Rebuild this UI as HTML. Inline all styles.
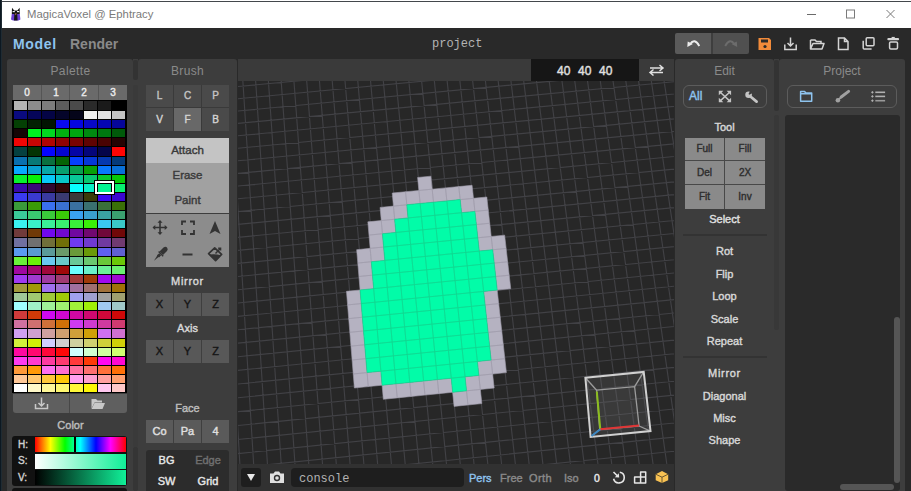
<!DOCTYPE html>
<html><head><meta charset="utf-8"><style>
html,body{margin:0;padding:0;}
body{width:911px;height:491px;position:relative;overflow:hidden;background:#292929;font-family:'Liberation Sans', sans-serif;}
body>div{position:absolute;}
.t{white-space:nowrap;overflow:visible;}
</style></head><body>
<div style="left:0px;top:0px;width:911px;height:28px;background:#ffffff;"></div>
<div style="left:0px;top:1px;width:911px;height:1px;background:#43474c;"></div>
<svg style="position:absolute;left:9px;top:6px;" width="13" height="16" viewBox="0 0 13 16">
<path d="M3 1.8 L5.2 4.6 H8.4 L10.6 1.8 L10.8 8 H2.8 Z" fill="#111"/>
<rect x="3.6" y="5" width="2.2" height="1.2" fill="#f0f0f0"/><rect x="8" y="5" width="2.2" height="1.2" fill="#f0f0f0"/>
<path d="M2.8 8 H10.8 L11.4 13.5 L9.5 14.5 H4 L2 13.5 Z" fill="#6b3fd0"/>
<path d="M5.4 8 H8.2 L8.6 14.5 H5 Z" fill="#151515"/>
<path d="M6 7.6 H7.6 L6.8 9.2 Z" fill="#f29a5a"/>
</svg>
<div class="t" style="left:27px;top:7px;width:200px;height:15px;line-height:15px;color:#7a7a7a;font-size:11.3px;font-weight:normal;text-align:left;font-family:'Liberation Sans', sans-serif;">MagicaVoxel @ Ephtracy</div>
<svg style="position:absolute;left:800px;top:5px;" width="110" height="20" viewBox="0 0 110 20">
<line x1="7" y1="9.5" x2="16" y2="9.5" stroke="#6a6a6a" stroke-width="1"/>
<rect x="46.5" y="5" width="8" height="8" fill="none" stroke="#7a7a7a" stroke-width="1"/>
<path d="M86.5 5 L94.5 13 M94.5 5 L86.5 13" stroke="#7a7a7a" stroke-width="1"/>
</svg>
<div style="left:0px;top:0px;width:1px;height:491px;background:#0c1821;"></div>
<div style="left:1px;top:0px;width:1px;height:491px;background:#1f2b33;"></div>
<div style="left:2px;top:28px;width:909px;height:31px;background:#292929;"></div>
<div class="t" style="left:13px;top:35px;width:50px;height:18px;line-height:18px;color:#8ec3ee;font-size:14px;font-weight:bold;text-align:left;font-family:'Liberation Sans', sans-serif;letter-spacing:0.7px;">Model</div>
<div class="t" style="left:70px;top:35px;width:60px;height:18px;line-height:18px;color:#8a8a8a;font-size:14px;font-weight:bold;text-align:left;font-family:'Liberation Sans', sans-serif;">Render</div>
<div class="t" style="left:432px;top:35px;width:80px;height:18px;line-height:18px;color:#b4b4b4;font-size:12px;font-weight:normal;text-align:left;font-family:'Liberation Mono', monospace;">project</div>
<div style="left:675px;top:33px;width:36px;height:21px;background:#5a5a5a;border-radius:2px 0 0 2px;"></div>
<div style="left:713px;top:33px;width:36px;height:21px;background:#505050;border-radius:0 2px 2px 0;"></div>
<div style="left:711px;top:33px;width:2px;height:21px;background:#3e3e3e;"></div>
<svg style="position:absolute;left:675px;top:33px;" width="74" height="21" viewBox="0 0 74 21">
<path d="M15 11.2 Q19.5 4.5 24.3 13" fill="none" stroke="#ececec" stroke-width="1.9"/>
<path d="M12.3 13.9 L12.7 8.4 L17.9 10.9 Z" fill="#ececec"/>
<path d="M59.5 11.2 Q55 4.5 50.2 13" fill="none" stroke="#6c6c6c" stroke-width="1.9"/>
<path d="M62.2 13.9 L61.8 8.4 L56.6 10.9 Z" fill="#6c6c6c"/>
</svg>
<svg style="position:absolute;left:757px;top:37px;" width="16" height="14" viewBox="0 0 16 14">
<path d="M1.5 1 H12 L14 3 V13 H1.5 Z" fill="#f28b3a"/>
<rect x="4" y="2.5" width="7" height="3" fill="#2b2b2b"/>
<circle cx="8" cy="9.5" r="1.6" fill="#2b2b2b"/>
</svg>
<svg style="position:absolute;left:783px;top:36px;" width="120" height="16" viewBox="0 0 120 16">
<g fill="none" stroke="#d4d4d4" stroke-width="1.5">
<path d="M1.8 8.5 V13.5 H13.2 V8.5"/>
<path d="M7.5 1.5 V10 M4.5 7 L7.5 10 L10.5 7"/>
<path d="M27.5 4 V13 H39 L41 7.5 H30 L27.5 13" stroke-linejoin="round"/>
<path d="M27.5 4 H32 L33.5 5.5 H38 V7.5"/>
<path d="M55.5 2 H61.5 L65 5.5 V13.5 H55.5 Z M61.5 2 V5.5 H65"/>
<rect x="83.2" y="1.8" width="7.8" height="7.9" rx="1"/>
<path d="M80.2 4.8 V12 Q80.2 13 81.2 13 H88.6"/>
<path d="M105.4 3.2 H115" stroke-width="2.2" stroke-linecap="round"/>
<path d="M108.6 1.6 H111.8" stroke-width="1.4"/>
<rect x="106.6" y="5.9" width="7.9" height="7.1" rx="1.2"/>
</g></svg>
<div style="left:7px;top:59px;width:126px;height:432px;background:#3d3d3d;border-radius:3px 3px 0 0;"></div>
<div class="t" style="left:8px;top:63px;width:125px;height:16px;line-height:16px;color:#8a8a8a;font-size:12px;font-weight:normal;text-align:center;font-family:'Liberation Sans', sans-serif;letter-spacing:0.4px;">Palette</div>
<div style="left:13px;top:85px;width:114px;height:15px;background:#6a6a6a;"></div>
<div class="t" style="left:13px;top:85px;width:28px;height:15px;line-height:15px;color:#ececec;font-size:10px;font-weight:normal;text-align:center;font-family:'Liberation Sans', sans-serif;-webkit-text-stroke:0.4px #ececec;">0</div>
<div style="left:41px;top:85px;width:1px;height:15px;background:#555555;"></div>
<div class="t" style="left:42px;top:85px;width:28px;height:15px;line-height:15px;color:#ececec;font-size:10px;font-weight:normal;text-align:center;font-family:'Liberation Sans', sans-serif;-webkit-text-stroke:0.4px #ececec;">1</div>
<div style="left:69px;top:85px;width:1px;height:15px;background:#555555;"></div>
<div class="t" style="left:70px;top:85px;width:28px;height:15px;line-height:15px;color:#ececec;font-size:10px;font-weight:normal;text-align:center;font-family:'Liberation Sans', sans-serif;-webkit-text-stroke:0.4px #ececec;">2</div>
<div style="left:98px;top:85px;width:1px;height:15px;background:#555555;"></div>
<div class="t" style="left:99px;top:85px;width:28px;height:15px;line-height:15px;color:#ececec;font-size:10px;font-weight:normal;text-align:center;font-family:'Liberation Sans', sans-serif;-webkit-text-stroke:0.4px #ececec;">3</div>
<div style="left:12px;top:100px;width:115px;height:293px;background:#000000;"></div>
<svg style="position:absolute;left:13px;top:100px;" width="114" height="293" viewBox="0 0 114 293"><rect x="1" y="1" width="13" height="9" fill="#b4b4b4"/><rect x="15" y="1" width="13" height="9" fill="#8c8c8c"/><rect x="29" y="1" width="13" height="9" fill="#7c7c7c"/><rect x="43" y="1" width="13" height="9" fill="#5c5c5c"/><rect x="57" y="1" width="13" height="9" fill="#4a4a4a"/><rect x="71" y="1" width="13" height="9" fill="#2a2a2a"/><rect x="85" y="1" width="13" height="9" fill="#1a1a1a"/><rect x="99" y="1" width="13" height="9" fill="#000000"/><rect x="1" y="11" width="13" height="8" fill="#0a0a80"/><rect x="15" y="11" width="13" height="8" fill="#05055a"/><rect x="29" y="11" width="13" height="8" fill="#040445"/><rect x="43" y="11" width="13" height="8" fill="#05052a"/><rect x="57" y="11" width="13" height="8" fill="#05051a"/><rect x="71" y="11" width="13" height="8" fill="#f0f0f0"/><rect x="85" y="11" width="13" height="8" fill="#e0e0e0"/><rect x="99" y="11" width="13" height="8" fill="#c4c4c4"/><rect x="1" y="20" width="13" height="8" fill="#044004"/><rect x="15" y="20" width="13" height="8" fill="#032003"/><rect x="29" y="20" width="13" height="8" fill="#021502"/><rect x="43" y="20" width="13" height="8" fill="#0a0af0"/><rect x="57" y="20" width="13" height="8" fill="#0505e0"/><rect x="71" y="20" width="13" height="8" fill="#0808c8"/><rect x="85" y="20" width="13" height="8" fill="#0505b4"/><rect x="99" y="20" width="13" height="8" fill="#06069a"/><rect x="1" y="29" width="13" height="8" fill="#140505"/><rect x="15" y="29" width="13" height="8" fill="#00f020"/><rect x="29" y="29" width="13" height="8" fill="#00d820"/><rect x="43" y="29" width="13" height="8" fill="#00b010"/><rect x="57" y="29" width="13" height="8" fill="#00a810"/><rect x="71" y="29" width="13" height="8" fill="#008a10"/><rect x="85" y="29" width="13" height="8" fill="#007810"/><rect x="99" y="29" width="13" height="8" fill="#005a0a"/><rect x="1" y="38" width="13" height="8" fill="#f00505"/><rect x="15" y="38" width="13" height="8" fill="#c80505"/><rect x="29" y="38" width="13" height="8" fill="#b00404"/><rect x="43" y="38" width="13" height="8" fill="#900303"/><rect x="57" y="38" width="13" height="8" fill="#7a0303"/><rect x="71" y="38" width="13" height="8" fill="#600303"/><rect x="85" y="38" width="13" height="8" fill="#4a0303"/><rect x="99" y="38" width="13" height="8" fill="#250303"/><rect x="1" y="47" width="13" height="9" fill="#054040"/><rect x="15" y="47" width="13" height="9" fill="#043304"/><rect x="29" y="47" width="13" height="9" fill="#0505ff"/><rect x="43" y="47" width="13" height="9" fill="#0505d0"/><rect x="57" y="47" width="13" height="9" fill="#0505a5"/><rect x="71" y="47" width="13" height="9" fill="#05057a"/><rect x="85" y="47" width="13" height="9" fill="#05054a"/><rect x="99" y="47" width="13" height="9" fill="#ff0505"/><rect x="1" y="57" width="13" height="8" fill="#0a70b0"/><rect x="15" y="57" width="13" height="8" fill="#087878"/><rect x="29" y="57" width="13" height="8" fill="#0a7040"/><rect x="43" y="57" width="13" height="8" fill="#056405"/><rect x="57" y="57" width="13" height="8" fill="#0540ff"/><rect x="71" y="57" width="13" height="8" fill="#0538d8"/><rect x="85" y="57" width="13" height="8" fill="#0538b0"/><rect x="99" y="57" width="13" height="8" fill="#053a7a"/><rect x="1" y="66" width="13" height="8" fill="#08a8ff"/><rect x="15" y="66" width="13" height="8" fill="#08a0d0"/><rect x="29" y="66" width="13" height="8" fill="#08a8a8"/><rect x="43" y="66" width="13" height="8" fill="#08a070"/><rect x="57" y="66" width="13" height="8" fill="#08a050"/><rect x="71" y="66" width="13" height="8" fill="#08a008"/><rect x="85" y="66" width="13" height="8" fill="#0878ff"/><rect x="99" y="66" width="13" height="8" fill="#0870d8"/><rect x="1" y="75" width="13" height="8" fill="#08f030"/><rect x="15" y="75" width="13" height="8" fill="#08f008"/><rect x="29" y="75" width="13" height="8" fill="#08c8f8"/><rect x="43" y="75" width="13" height="8" fill="#08c8c8"/><rect x="57" y="75" width="13" height="8" fill="#08c898"/><rect x="71" y="75" width="13" height="8" fill="#08c870"/><rect x="85" y="75" width="13" height="8" fill="#08c830"/><rect x="99" y="75" width="13" height="8" fill="#08c808"/><rect x="1" y="84" width="13" height="8" fill="#3a08a8"/><rect x="15" y="84" width="13" height="8" fill="#3a0878"/><rect x="29" y="84" width="13" height="8" fill="#300830"/><rect x="43" y="84" width="13" height="8" fill="#300808"/><rect x="57" y="84" width="13" height="8" fill="#08ffff"/><rect x="71" y="84" width="13" height="8" fill="#08f0c8"/><rect x="85" y="84" width="13" height="8" fill="#02f592"/><rect x="99" y="84" width="13" height="8" fill="#08f070"/><rect x="1" y="93" width="13" height="8" fill="#3a3af0"/><rect x="15" y="93" width="13" height="8" fill="#3a3ad0"/><rect x="29" y="93" width="13" height="8" fill="#3a3aa0"/><rect x="43" y="93" width="13" height="8" fill="#3a3a70"/><rect x="57" y="93" width="13" height="8" fill="#3a3a3a"/><rect x="71" y="93" width="13" height="8" fill="#3a3a08"/><rect x="85" y="93" width="13" height="8" fill="#3a08f0"/><rect x="99" y="93" width="13" height="8" fill="#3a08d0"/><rect x="1" y="102" width="13" height="8" fill="#3a9a3a"/><rect x="15" y="102" width="13" height="8" fill="#3a9a08"/><rect x="29" y="102" width="13" height="8" fill="#3a70f0"/><rect x="43" y="102" width="13" height="8" fill="#3a70d0"/><rect x="57" y="102" width="13" height="8" fill="#3a70a0"/><rect x="71" y="102" width="13" height="8" fill="#3a7070"/><rect x="85" y="102" width="13" height="8" fill="#3a703a"/><rect x="99" y="102" width="13" height="8" fill="#3a7008"/><rect x="1" y="111" width="13" height="8" fill="#3ac898"/><rect x="15" y="111" width="13" height="8" fill="#3ac870"/><rect x="29" y="111" width="13" height="8" fill="#3ac83a"/><rect x="43" y="111" width="13" height="8" fill="#3ac808"/><rect x="57" y="111" width="13" height="8" fill="#3aa0f0"/><rect x="71" y="111" width="13" height="8" fill="#3aa0d0"/><rect x="85" y="111" width="13" height="8" fill="#3aa0a0"/><rect x="99" y="111" width="13" height="8" fill="#3aa070"/><rect x="1" y="120" width="13" height="8" fill="#3af0f0"/><rect x="15" y="120" width="13" height="8" fill="#3af0c8"/><rect x="29" y="120" width="13" height="8" fill="#3af098"/><rect x="43" y="120" width="13" height="8" fill="#3af070"/><rect x="57" y="120" width="13" height="8" fill="#3af03a"/><rect x="71" y="120" width="13" height="8" fill="#3af008"/><rect x="85" y="120" width="13" height="8" fill="#3ac8f0"/><rect x="99" y="120" width="13" height="8" fill="#3ac8c8"/><rect x="1" y="129" width="13" height="8" fill="#703a3a"/><rect x="15" y="129" width="13" height="8" fill="#703a08"/><rect x="29" y="129" width="13" height="8" fill="#7008f0"/><rect x="43" y="129" width="13" height="8" fill="#7008d0"/><rect x="57" y="129" width="13" height="8" fill="#7008a0"/><rect x="71" y="129" width="13" height="8" fill="#700870"/><rect x="85" y="129" width="13" height="8" fill="#70083a"/><rect x="99" y="129" width="13" height="8" fill="#700808"/><rect x="1" y="138" width="13" height="9" fill="#7070a0"/><rect x="15" y="138" width="13" height="9" fill="#707070"/><rect x="29" y="138" width="13" height="9" fill="#70703a"/><rect x="43" y="138" width="13" height="9" fill="#707008"/><rect x="57" y="138" width="13" height="9" fill="#703af0"/><rect x="71" y="138" width="13" height="9" fill="#703ad0"/><rect x="85" y="138" width="13" height="9" fill="#703aa0"/><rect x="99" y="138" width="13" height="9" fill="#703a70"/><rect x="1" y="148" width="13" height="8" fill="#5a9af0"/><rect x="15" y="148" width="13" height="8" fill="#5a9ad0"/><rect x="29" y="148" width="13" height="8" fill="#5a9a9a"/><rect x="43" y="148" width="13" height="8" fill="#6a9a6a"/><rect x="57" y="148" width="13" height="8" fill="#6a9a3a"/><rect x="71" y="148" width="13" height="8" fill="#6a9a08"/><rect x="85" y="148" width="13" height="8" fill="#6060f0"/><rect x="99" y="148" width="13" height="8" fill="#6060d0"/><rect x="1" y="157" width="13" height="8" fill="#6af03a"/><rect x="15" y="157" width="13" height="8" fill="#6af008"/><rect x="29" y="157" width="13" height="8" fill="#6ac8f0"/><rect x="43" y="157" width="13" height="8" fill="#6ac8c8"/><rect x="57" y="157" width="13" height="8" fill="#6ac898"/><rect x="71" y="157" width="13" height="8" fill="#6ac870"/><rect x="85" y="157" width="13" height="8" fill="#6ac83a"/><rect x="99" y="157" width="13" height="8" fill="#6ac808"/><rect x="1" y="166" width="13" height="8" fill="#a008a0"/><rect x="15" y="166" width="13" height="8" fill="#a00870"/><rect x="29" y="166" width="13" height="8" fill="#a0083a"/><rect x="43" y="166" width="13" height="8" fill="#a00808"/><rect x="57" y="166" width="13" height="8" fill="#6affff"/><rect x="71" y="166" width="13" height="8" fill="#6af0c8"/><rect x="85" y="166" width="13" height="8" fill="#6af098"/><rect x="99" y="166" width="13" height="8" fill="#6af070"/><rect x="1" y="175" width="13" height="8" fill="#a03af0"/><rect x="15" y="175" width="13" height="8" fill="#a03ad0"/><rect x="29" y="175" width="13" height="8" fill="#a03aa0"/><rect x="43" y="175" width="13" height="8" fill="#a03a70"/><rect x="57" y="175" width="13" height="8" fill="#a03a3a"/><rect x="71" y="175" width="13" height="8" fill="#a03a08"/><rect x="85" y="175" width="13" height="8" fill="#a008f0"/><rect x="99" y="175" width="13" height="8" fill="#a008d0"/><rect x="1" y="184" width="13" height="8" fill="#a09a3a"/><rect x="15" y="184" width="13" height="8" fill="#a09a08"/><rect x="29" y="184" width="13" height="8" fill="#a070f0"/><rect x="43" y="184" width="13" height="8" fill="#a070d0"/><rect x="57" y="184" width="13" height="8" fill="#a070a0"/><rect x="71" y="184" width="13" height="8" fill="#a07070"/><rect x="85" y="184" width="13" height="8" fill="#a0703a"/><rect x="99" y="184" width="13" height="8" fill="#a07008"/><rect x="1" y="193" width="13" height="8" fill="#a0c898"/><rect x="15" y="193" width="13" height="8" fill="#a0c870"/><rect x="29" y="193" width="13" height="8" fill="#a0c83a"/><rect x="43" y="193" width="13" height="8" fill="#a0c808"/><rect x="57" y="193" width="13" height="8" fill="#a0a0f0"/><rect x="71" y="193" width="13" height="8" fill="#a0a0d0"/><rect x="85" y="193" width="13" height="8" fill="#a0a0a0"/><rect x="99" y="193" width="13" height="8" fill="#a0a070"/><rect x="1" y="202" width="13" height="8" fill="#a0ffff"/><rect x="15" y="202" width="13" height="8" fill="#a0f0c8"/><rect x="29" y="202" width="13" height="8" fill="#a0f098"/><rect x="43" y="202" width="13" height="8" fill="#a0f070"/><rect x="57" y="202" width="13" height="8" fill="#a0f03a"/><rect x="71" y="202" width="13" height="8" fill="#a0f008"/><rect x="85" y="202" width="13" height="8" fill="#a0c8f0"/><rect x="99" y="202" width="13" height="8" fill="#a0c8c8"/><rect x="1" y="211" width="13" height="8" fill="#d03a3a"/><rect x="15" y="211" width="13" height="8" fill="#d03a08"/><rect x="29" y="211" width="13" height="8" fill="#d008f0"/><rect x="43" y="211" width="13" height="8" fill="#d008d0"/><rect x="57" y="211" width="13" height="8" fill="#d008a0"/><rect x="71" y="211" width="13" height="8" fill="#d00870"/><rect x="85" y="211" width="13" height="8" fill="#d0083a"/><rect x="99" y="211" width="13" height="8" fill="#d00808"/><rect x="1" y="220" width="13" height="8" fill="#d070a0"/><rect x="15" y="220" width="13" height="8" fill="#d07070"/><rect x="29" y="220" width="13" height="8" fill="#d0703a"/><rect x="43" y="220" width="13" height="8" fill="#d07008"/><rect x="57" y="220" width="13" height="8" fill="#d03af0"/><rect x="71" y="220" width="13" height="8" fill="#d03ad0"/><rect x="85" y="220" width="13" height="8" fill="#d03aa0"/><rect x="99" y="220" width="13" height="8" fill="#d03a70"/><rect x="1" y="229" width="13" height="9" fill="#d0a0f0"/><rect x="15" y="229" width="13" height="9" fill="#d0a0d0"/><rect x="29" y="229" width="13" height="9" fill="#d0a0a0"/><rect x="43" y="229" width="13" height="9" fill="#d0a070"/><rect x="57" y="229" width="13" height="9" fill="#d0a03a"/><rect x="71" y="229" width="13" height="9" fill="#d0a008"/><rect x="85" y="229" width="13" height="9" fill="#d070f0"/><rect x="99" y="229" width="13" height="9" fill="#d070d0"/><rect x="1" y="239" width="13" height="8" fill="#d0f03a"/><rect x="15" y="239" width="13" height="8" fill="#d0f008"/><rect x="29" y="239" width="13" height="8" fill="#d0d0ff"/><rect x="43" y="239" width="13" height="8" fill="#d0d0d0"/><rect x="57" y="239" width="13" height="8" fill="#d0d0a0"/><rect x="71" y="239" width="13" height="8" fill="#d0d070"/><rect x="85" y="239" width="13" height="8" fill="#d0d03a"/><rect x="99" y="239" width="13" height="8" fill="#d0d008"/><rect x="1" y="248" width="13" height="8" fill="#ff08a0"/><rect x="15" y="248" width="13" height="8" fill="#ff0870"/><rect x="29" y="248" width="13" height="8" fill="#ff083a"/><rect x="43" y="248" width="13" height="8" fill="#ff0808"/><rect x="57" y="248" width="13" height="8" fill="#d0ffff"/><rect x="71" y="248" width="13" height="8" fill="#d0ffd0"/><rect x="85" y="248" width="13" height="8" fill="#d0ffa0"/><rect x="99" y="248" width="13" height="8" fill="#d0ff70"/><rect x="1" y="257" width="13" height="8" fill="#ff3af0"/><rect x="15" y="257" width="13" height="8" fill="#ff3ad0"/><rect x="29" y="257" width="13" height="8" fill="#ff3aa0"/><rect x="43" y="257" width="13" height="8" fill="#ff3a70"/><rect x="57" y="257" width="13" height="8" fill="#ff3a3a"/><rect x="71" y="257" width="13" height="8" fill="#ff3a08"/><rect x="85" y="257" width="13" height="8" fill="#ff08f0"/><rect x="99" y="257" width="13" height="8" fill="#ff08d0"/><rect x="1" y="266" width="13" height="8" fill="#ff9a3a"/><rect x="15" y="266" width="13" height="8" fill="#ff9a08"/><rect x="29" y="266" width="13" height="8" fill="#ff70f0"/><rect x="43" y="266" width="13" height="8" fill="#ff70d0"/><rect x="57" y="266" width="13" height="8" fill="#ff70a0"/><rect x="71" y="266" width="13" height="8" fill="#ff7070"/><rect x="85" y="266" width="13" height="8" fill="#ff703a"/><rect x="99" y="266" width="13" height="8" fill="#ff7008"/><rect x="1" y="275" width="13" height="8" fill="#ffc898"/><rect x="15" y="275" width="13" height="8" fill="#ffc870"/><rect x="29" y="275" width="13" height="8" fill="#ffc83a"/><rect x="43" y="275" width="13" height="8" fill="#ffc808"/><rect x="57" y="275" width="13" height="8" fill="#ffa0f0"/><rect x="71" y="275" width="13" height="8" fill="#ffa0d0"/><rect x="85" y="275" width="13" height="8" fill="#ffa0a0"/><rect x="99" y="275" width="13" height="8" fill="#ffa070"/><rect x="1" y="284" width="13" height="8" fill="#ffffff"/><rect x="15" y="284" width="13" height="8" fill="#fff8c8"/><rect x="29" y="284" width="13" height="8" fill="#fff898"/><rect x="43" y="284" width="13" height="8" fill="#fff870"/><rect x="57" y="284" width="13" height="8" fill="#fff83a"/><rect x="71" y="284" width="13" height="8" fill="#fff808"/><rect x="85" y="284" width="13" height="8" fill="#ffc8f0"/><rect x="99" y="284" width="13" height="8" fill="#ffc8c8"/></svg>
<div style="left:95px;top:181px;width:19px;height:13px;border:2px solid #fff;box-sizing:border-box;box-shadow:0 0 0 1px #000;"></div>
<div style="left:13px;top:394px;width:56px;height:19px;background:#5f5f5f;border-radius:0 0 0 3px;"></div>
<div style="left:70px;top:394px;width:57px;height:19px;background:#5f5f5f;border-radius:0 0 3px 0;"></div>
<div style="left:69px;top:394px;width:1px;height:19px;background:#474747;"></div>
<svg style="position:absolute;left:13px;top:394px;" width="114" height="19" viewBox="0 0 114 19">
<g fill="none" stroke="#c8c8c8" stroke-width="1.5">
<path d="M22.5 10 V14.5 H34.5 V10"/><path d="M28.5 3.5 V12 M25.5 9 L28.5 12 L31.5 9"/>
</g>
<path d="M78.5 5 H83 L84.5 6.5 H89 V8.5 H81.5 L78.5 14.5 Z" fill="#c8c8c8"/>
<path d="M81.5 9 H92 L89.5 15 H78.5 Z" fill="#c8c8c8"/>
</svg>
<div class="t" style="left:8px;top:417px;width:125px;height:16px;line-height:16px;color:#bdbdbd;font-size:11px;font-weight:normal;text-align:center;font-family:'Liberation Sans', sans-serif;-webkit-text-stroke:0.4px #bdbdbd;">Color</div>
<div style="left:12px;top:436px;width:115px;height:50px;background:#111111;border-radius:3px;"></div>
<div class="t" style="left:18px;top:437px;width:20px;height:16px;line-height:16px;color:#cfcfcf;font-size:10px;font-weight:normal;text-align:left;font-family:'Liberation Sans', sans-serif;-webkit-text-stroke:0.4px #cfcfcf;">H:</div>
<div class="t" style="left:18px;top:453px;width:20px;height:16px;line-height:16px;color:#cfcfcf;font-size:10px;font-weight:normal;text-align:left;font-family:'Liberation Sans', sans-serif;-webkit-text-stroke:0.4px #cfcfcf;">S:</div>
<div class="t" style="left:18px;top:470px;width:20px;height:16px;line-height:16px;color:#cfcfcf;font-size:10px;font-weight:normal;text-align:left;font-family:'Liberation Sans', sans-serif;-webkit-text-stroke:0.4px #cfcfcf;">V:</div>
<div style="left:35px;top:437px;width:91px;height:15px;background:linear-gradient(to right,#ff0000,#ffff00 17%,#00ff00 33%,#00ffff 50%,#0000ff 67%,#ff00ff 83%,#ff0000);"></div>
<div style="left:74px;top:437px;width:2px;height:15px;background:#000;"></div>
<div style="left:35px;top:454px;width:91px;height:15px;background:linear-gradient(to right,#ffffff,#10f098);"></div>
<div style="left:35px;top:470px;width:91px;height:15px;background:linear-gradient(to right,#000000,#10f098);"></div>
<div style="left:12px;top:488px;width:115px;height:3px;background:#111111;border-radius:3px 3px 0 0;"></div>
<div style="left:133px;top:59px;width:5px;height:432px;background:#3d3d3d;"></div>
<div style="left:133px;top:60px;width:5px;height:20px;background:#333333;border-radius:2px;"></div>
<div style="left:133px;top:85px;width:5px;height:362px;background:#3a3a3a;border-radius:2px;"></div>
<div style="left:133px;top:447px;width:5px;height:44px;background:#353535;border-radius:2px;"></div>
<div style="left:138px;top:59px;width:99px;height:432px;background:#3d3d3d;border-radius:3px 3px 0 0;"></div>
<div class="t" style="left:138px;top:63px;width:99px;height:16px;line-height:16px;color:#8a8a8a;font-size:12px;font-weight:normal;text-align:center;font-family:'Liberation Sans', sans-serif;letter-spacing:0.3px;">Brush</div>
<div style="left:146px;top:85px;width:83px;height:46px;background:#3a3a3a;"></div>
<div style="left:146px;top:85px;width:27px;height:22px;background:#4a4a4a;"></div>
<div class="t" style="left:146px;top:85px;width:27px;height:22px;line-height:22px;color:#c4c4c4;font-size:10px;font-weight:normal;text-align:center;font-family:'Liberation Sans', sans-serif;-webkit-text-stroke:0.4px #c4c4c4;">L</div>
<div style="left:174px;top:85px;width:27px;height:22px;background:#4a4a4a;"></div>
<div class="t" style="left:174px;top:85px;width:27px;height:22px;line-height:22px;color:#c4c4c4;font-size:10px;font-weight:normal;text-align:center;font-family:'Liberation Sans', sans-serif;-webkit-text-stroke:0.4px #c4c4c4;">C</div>
<div style="left:202px;top:85px;width:27px;height:22px;background:#4a4a4a;"></div>
<div class="t" style="left:202px;top:85px;width:27px;height:22px;line-height:22px;color:#c4c4c4;font-size:10px;font-weight:normal;text-align:center;font-family:'Liberation Sans', sans-serif;-webkit-text-stroke:0.4px #c4c4c4;">P</div>
<div style="left:146px;top:108px;width:27px;height:23px;background:#4a4a4a;"></div>
<div class="t" style="left:146px;top:108px;width:27px;height:23px;line-height:23px;color:#d4d4d4;font-size:10px;font-weight:normal;text-align:center;font-family:'Liberation Sans', sans-serif;-webkit-text-stroke:0.4px #d4d4d4;">V</div>
<div style="left:174px;top:108px;width:27px;height:23px;background:#686868;"></div>
<div class="t" style="left:174px;top:108px;width:27px;height:23px;line-height:23px;color:#d4d4d4;font-size:10px;font-weight:normal;text-align:center;font-family:'Liberation Sans', sans-serif;-webkit-text-stroke:0.4px #d4d4d4;">F</div>
<div style="left:202px;top:108px;width:27px;height:23px;background:#4a4a4a;"></div>
<div class="t" style="left:202px;top:108px;width:27px;height:23px;line-height:23px;color:#d4d4d4;font-size:10px;font-weight:normal;text-align:center;font-family:'Liberation Sans', sans-serif;-webkit-text-stroke:0.4px #d4d4d4;">B</div>
<div style="left:146px;top:138px;width:83px;height:25px;background:#c4c4c4;"></div>
<div class="t" style="left:146px;top:138px;width:83px;height:25px;line-height:25px;color:#3a3a3a;font-size:11.5px;font-weight:normal;text-align:center;font-family:'Liberation Sans', sans-serif;-webkit-text-stroke:0.4px #3a3a3a;">Attach</div>
<div style="left:146px;top:163px;width:83px;height:50px;background:#a1a1a1;"></div>
<div class="t" style="left:146px;top:163px;width:83px;height:25px;line-height:25px;color:#3a3a3a;font-size:11.5px;font-weight:normal;text-align:center;font-family:'Liberation Sans', sans-serif;-webkit-text-stroke:0.4px #3a3a3a;">Erase</div>
<div class="t" style="left:146px;top:188px;width:83px;height:25px;line-height:25px;color:#3a3a3a;font-size:11.5px;font-weight:normal;text-align:center;font-family:'Liberation Sans', sans-serif;-webkit-text-stroke:0.4px #3a3a3a;">Paint</div>
<div style="left:146px;top:214px;width:83px;height:53px;background:#8c8c8c;"></div>
<svg style="position:absolute;left:146px;top:214px;" width="83" height="53" viewBox="0 0 83 53">
<g fill="#333" stroke="#333">
<path d="M14 7 V20 M7.5 13.5 H20.5" stroke-width="1.6" fill="none"/>
<path d="M14 6 L11.5 8.8 H16.5 Z M14 21 L11.5 18.2 H16.5 Z M6.5 13.5 L9.3 11 V16 Z M21.5 13.5 L18.7 11 V16 Z" stroke="none"/>
<path d="M36 11 V7.5 H40 M44 7.5 H48 V11 M48 16 V20 H44 M40 20 H36 V16" fill="none" stroke-width="1.8"/>
<path d="M69 7 L74.5 20 L69 17 L63.5 20 Z" stroke="none"/>
<path d="M8 46.8 L12 40.2 L13.8 42 Z" stroke="none"/>
<path d="M11 41.5 L13.2 39.3 L15.2 41.3 L13 43.5 Z" stroke="none"/>
<path d="M13.5 37.5 L17.5 33.5 Q19.5 32 21 33.5 Q22.5 35 21 37 L17 41 Z" stroke="none"/>
<path d="M12.6 37.6 L17.2 42.2" stroke-width="1.4"/>
<path d="M36.5 40.5 H46.5" stroke-width="2" fill="none"/>
<path d="M62.6 39.6 L68.7 33.8 L75.6 40.4 L69.6 46.6 Z" fill="none" stroke-width="1.7" stroke-linejoin="round"/>
<path d="M63.2 40.6 Q69 39.8 75 41.2 L69.6 46.6 Z" stroke="none"/>
<path d="M69.5 39.5 L74.5 34.2 M72.2 34.2 H74.6 V36.5" fill="none" stroke-width="1.4"/>
</g></svg>
<div class="t" style="left:138px;top:272px;width:99px;height:18px;line-height:18px;color:#d8d8d8;font-size:11px;font-weight:normal;text-align:center;font-family:'Liberation Sans', sans-serif;letter-spacing:0.7px;-webkit-text-stroke:0.4px #d8d8d8;">Mirror</div>
<div style="left:146px;top:293px;width:83px;height:23px;background:#3f3f3f;"></div>
<div style="left:146px;top:293px;width:27px;height:23px;background:#585858;"></div>
<div class="t" style="left:146px;top:293px;width:27px;height:23px;line-height:23px;color:#151515;font-size:11px;font-weight:normal;text-align:center;font-family:'Liberation Sans', sans-serif;-webkit-text-stroke:0.4px #151515;">X</div>
<div style="left:174px;top:293px;width:27px;height:23px;background:#585858;"></div>
<div class="t" style="left:174px;top:293px;width:27px;height:23px;line-height:23px;color:#151515;font-size:11px;font-weight:normal;text-align:center;font-family:'Liberation Sans', sans-serif;-webkit-text-stroke:0.4px #151515;">Y</div>
<div style="left:202px;top:293px;width:27px;height:23px;background:#585858;"></div>
<div class="t" style="left:202px;top:293px;width:27px;height:23px;line-height:23px;color:#151515;font-size:11px;font-weight:normal;text-align:center;font-family:'Liberation Sans', sans-serif;-webkit-text-stroke:0.4px #151515;">Z</div>
<div style="left:146px;top:340px;width:83px;height:23px;background:#3f3f3f;"></div>
<div style="left:146px;top:340px;width:27px;height:23px;background:#585858;"></div>
<div class="t" style="left:146px;top:340px;width:27px;height:23px;line-height:23px;color:#151515;font-size:11px;font-weight:normal;text-align:center;font-family:'Liberation Sans', sans-serif;-webkit-text-stroke:0.4px #151515;">X</div>
<div style="left:174px;top:340px;width:27px;height:23px;background:#585858;"></div>
<div class="t" style="left:174px;top:340px;width:27px;height:23px;line-height:23px;color:#151515;font-size:11px;font-weight:normal;text-align:center;font-family:'Liberation Sans', sans-serif;-webkit-text-stroke:0.4px #151515;">Y</div>
<div style="left:202px;top:340px;width:27px;height:23px;background:#585858;"></div>
<div class="t" style="left:202px;top:340px;width:27px;height:23px;line-height:23px;color:#151515;font-size:11px;font-weight:normal;text-align:center;font-family:'Liberation Sans', sans-serif;-webkit-text-stroke:0.4px #151515;">Z</div>
<div class="t" style="left:138px;top:319px;width:99px;height:18px;line-height:18px;color:#d8d8d8;font-size:11px;font-weight:normal;text-align:center;font-family:'Liberation Sans', sans-serif;-webkit-text-stroke:0.4px #d8d8d8;">Axis</div>
<div class="t" style="left:138px;top:399px;width:99px;height:18px;line-height:18px;color:#bdbdbd;font-size:11px;font-weight:normal;text-align:center;font-family:'Liberation Sans', sans-serif;-webkit-text-stroke:0.4px #bdbdbd;">Face</div>
<div style="left:146px;top:420px;width:83px;height:23px;background:#3f3f3f;"></div>
<div style="left:146px;top:420px;width:27px;height:23px;background:#5a5a5a;"></div>
<div class="t" style="left:146px;top:420px;width:27px;height:23px;line-height:23px;color:#e0e0e0;font-size:11px;font-weight:normal;text-align:center;font-family:'Liberation Sans', sans-serif;-webkit-text-stroke:0.4px #e0e0e0;">Co</div>
<div style="left:174px;top:420px;width:27px;height:23px;background:#5a5a5a;"></div>
<div class="t" style="left:174px;top:420px;width:27px;height:23px;line-height:23px;color:#e0e0e0;font-size:11px;font-weight:normal;text-align:center;font-family:'Liberation Sans', sans-serif;-webkit-text-stroke:0.4px #e0e0e0;">Pa</div>
<div style="left:202px;top:420px;width:27px;height:23px;background:#5a5a5a;"></div>
<div class="t" style="left:202px;top:420px;width:27px;height:23px;line-height:23px;color:#e0e0e0;font-size:11px;font-weight:normal;text-align:center;font-family:'Liberation Sans', sans-serif;-webkit-text-stroke:0.4px #e0e0e0;">4</div>
<div style="left:146px;top:450px;width:83px;height:41px;background:#2c2c2c;border-radius:3px 3px 0 0;"></div>
<div class="t" style="left:146px;top:451px;width:41px;height:19px;line-height:19px;color:#e8e8e8;font-size:11px;font-weight:normal;text-align:center;font-family:'Liberation Sans', sans-serif;-webkit-text-stroke:0.4px #e8e8e8;">BG</div>
<div class="t" style="left:187px;top:451px;width:42px;height:19px;line-height:19px;color:#707070;font-size:11px;font-weight:normal;text-align:center;font-family:'Liberation Sans', sans-serif;-webkit-text-stroke:0.4px #707070;">Edge</div>
<div class="t" style="left:146px;top:472px;width:41px;height:19px;line-height:19px;color:#e8e8e8;font-size:11px;font-weight:normal;text-align:center;font-family:'Liberation Sans', sans-serif;-webkit-text-stroke:0.4px #e8e8e8;">SW</div>
<div class="t" style="left:187px;top:472px;width:42px;height:19px;line-height:19px;color:#e8e8e8;font-size:11px;font-weight:normal;text-align:center;font-family:'Liberation Sans', sans-serif;-webkit-text-stroke:0.4px #e8e8e8;">Grid</div>
<div style="left:238px;top:59px;width:436px;height:22px;background:#3a3a3a;"></div>
<div style="left:531px;top:59px;width:108px;height:22px;background:#161616;"></div>
<div class="t" style="left:557px;top:60px;width:20px;height:22px;line-height:22px;color:#e0e0e0;font-size:12px;font-weight:normal;text-align:left;font-family:'Liberation Sans', sans-serif;-webkit-text-stroke:0.4px #e0e0e0;">40</div>
<div class="t" style="left:578px;top:60px;width:20px;height:22px;line-height:22px;color:#e0e0e0;font-size:12px;font-weight:normal;text-align:left;font-family:'Liberation Sans', sans-serif;-webkit-text-stroke:0.4px #e0e0e0;">40</div>
<div class="t" style="left:599px;top:60px;width:20px;height:22px;line-height:22px;color:#e0e0e0;font-size:12px;font-weight:normal;text-align:left;font-family:'Liberation Sans', sans-serif;-webkit-text-stroke:0.4px #e0e0e0;">40</div>
<svg style="position:absolute;left:646px;top:62px;" width="22" height="16" viewBox="0 0 22 16"><g fill="none" stroke="#e0e0e0" stroke-width="1.5">
<path d="M4 6 H17 M13.5 3 L17 6 L13.5 9"/><path d="M17 10.5 H4 M7.5 7.5 L4 10.5 L7.5 13.5"/></g></svg>
<svg style="position:absolute;left:238px;top:81px;" width="436" height="383" viewBox="0 0 436 383"><rect width="436" height="383" fill="#272727"/><path d="M-75.78 -83.03L-50.74 434.84M-63.29 -84.19L-36.89 433.41M-50.80 -85.35L-23.06 431.98M-38.32 -86.51L-9.23 430.55M-25.84 -87.67L4.58 429.12M-13.37 -88.82L18.39 427.69M-0.91 -89.98L32.20 426.27M11.55 -91.13L45.99 424.84M23.99 -92.29L59.78 423.41M36.44 -93.44L73.56 421.99M48.88 -94.60L87.33 420.56M61.31 -95.75L101.09 419.14M73.73 -96.90L114.85 417.72M86.15 -98.05L128.60 416.30M98.56 -99.20L142.34 414.88M110.97 -100.36L156.07 413.46M123.36 -101.51L169.80 412.04M135.76 -102.66L183.51 410.62M148.14 -103.80L197.22 409.20M160.52 -104.95L210.92 407.78M172.90 -106.10L224.62 406.37M185.27 -107.25L238.30 404.95M197.63 -108.39L251.98 403.54M209.98 -109.54L265.65 402.13M222.33 -110.69L279.32 400.71M234.67 -111.83L292.97 399.30M247.01 -112.97L306.62 397.89M259.34 -114.12L320.26 396.48M271.66 -115.26L333.89 395.07M283.98 -116.40L347.52 393.66M296.29 -117.55L361.14 392.25M308.60 -118.69L374.75 390.85M320.90 -119.83L388.35 389.44M333.19 -120.97L401.94 388.03M345.47 -122.11L415.53 386.63M357.75 -123.25L429.11 385.22M370.03 -124.39L442.68 383.82M382.30 -125.52L456.24 382.42M394.56 -126.66L469.80 381.02M406.81 -127.80L483.35 379.62M419.06 -128.93L496.89 378.22M431.30 -130.07L510.42 376.82M443.54 -131.20L523.95 375.42M455.77 -132.34L537.47 374.02M468.00 -133.47L550.98 372.62M480.21 -134.61L564.48 371.23M492.43 -135.74L577.98 369.83M504.63 -136.87L591.46 368.44M-100.79 -80.71L516.83 -138.00M-100.28 -68.99L518.83 -126.57M-99.78 -57.22L520.83 -115.08M-99.27 -45.38L522.84 -103.54M-98.75 -33.48L524.87 -91.93M-98.24 -21.53L526.90 -80.28M-97.72 -9.52L528.95 -68.56M-97.20 2.56L531.00 -56.79M-96.68 14.69L533.06 -44.96M-96.15 26.88L535.14 -33.07M-95.62 39.14L537.22 -21.12M-95.09 51.45L539.32 -9.11M-94.56 63.83L541.42 2.95M-94.02 76.27L543.54 15.08M-93.48 88.78L545.67 27.27M-92.94 101.35L547.80 39.52M-92.40 113.98L549.95 51.83M-91.85 126.67L552.11 64.20M-91.30 139.44L554.28 76.64M-90.75 152.26L556.46 89.14M-90.19 165.16L558.65 101.70M-89.63 178.12L560.85 114.32M-89.07 191.14L563.07 127.01M-88.51 204.24L565.29 139.77M-87.94 217.40L567.53 152.59M-87.37 230.63L569.78 165.48M-86.80 243.93L572.04 178.43M-86.22 257.30L574.31 191.45M-85.64 270.74L576.59 204.53M-85.06 284.25L578.89 217.69M-84.47 297.83L581.19 230.91M-83.88 311.49L583.51 244.21M-83.29 325.21L585.84 257.57M-82.70 339.01L588.19 271.00M-82.10 352.89L590.54 284.51M-81.50 366.83L592.91 298.08M-80.89 380.85L595.29 311.73M-80.29 394.95L597.69 325.45M-79.68 409.13L600.09 339.24M-79.06 423.38L602.51 353.10" stroke="#414145" stroke-width="1.15" fill="none"/><path d="M179.60 96.48L192.87 95.20L194.18 108.17L180.87 109.46ZM154.22 112.05L167.55 110.76L168.80 123.81L155.44 125.12ZM167.55 110.76L180.87 109.46L182.15 122.51L168.80 123.81ZM180.87 109.46L194.18 108.17L195.50 121.21L182.15 122.51ZM194.18 108.17L207.49 106.88L208.84 119.91L195.50 121.21ZM207.49 106.88L220.78 105.58L222.17 118.61L208.84 119.91ZM220.78 105.58L234.07 104.29L235.49 117.31L222.17 118.61ZM142.07 126.42L155.44 125.12L156.65 138.25L143.25 139.56ZM155.44 125.12L168.80 123.81L170.05 136.94L156.65 138.25ZM222.17 118.61L235.49 117.31L236.92 130.40L223.56 131.71ZM235.49 117.31L248.81 116.01L250.27 129.10L236.92 130.40ZM129.84 140.87L143.25 139.56L144.44 152.76L130.99 154.08ZM143.25 139.56L156.65 138.25L157.88 151.45L144.44 152.76ZM236.92 130.40L250.27 129.10L251.74 142.25L238.35 143.56ZM130.99 154.08L144.44 152.76L145.64 166.04L132.15 167.37ZM238.35 143.56L251.74 142.25L253.21 155.47L239.79 156.79ZM118.67 168.69L132.15 167.37L133.32 180.72L119.80 182.06ZM132.15 167.37L145.64 166.04L146.84 179.39L133.32 180.72ZM239.79 156.79L253.21 155.47L254.70 168.76L241.24 170.09ZM253.21 155.47L266.63 154.15L268.15 167.43L254.70 168.76ZM119.80 182.06L133.32 180.72L134.49 194.15L120.93 195.49ZM254.70 168.76L268.15 167.43L269.67 180.79L256.19 182.12ZM120.93 195.49L134.49 194.15L135.67 207.65L122.08 209.00ZM256.19 182.12L269.67 180.79L271.21 194.21L257.69 195.55ZM108.47 210.34L122.08 209.00L123.23 222.57L109.59 223.93ZM257.69 195.55L271.21 194.21L272.75 207.71L259.20 209.06ZM109.59 223.93L123.23 222.57L124.38 236.22L110.71 237.59ZM245.64 210.40L259.20 209.06L260.71 222.63L247.12 223.99ZM110.71 237.59L124.38 236.22L125.54 249.95L111.83 251.32ZM247.12 223.99L260.71 222.63L262.24 236.28L248.60 237.65ZM111.83 251.32L125.54 249.95L126.71 263.75L112.96 265.13ZM248.60 237.65L262.24 236.28L263.77 250.01L250.10 251.38ZM112.96 265.13L126.71 263.75L127.88 277.62L114.10 279.01ZM250.10 251.38L263.77 250.01L265.31 263.80L251.60 265.18ZM114.10 279.01L127.88 277.62L129.06 291.57L115.24 292.96ZM251.60 265.18L265.31 263.80L266.86 277.68L253.12 279.06ZM115.24 292.96L129.06 291.57L130.25 305.60L116.39 307.00ZM129.06 291.57L142.88 290.18L144.10 304.19L130.25 305.60ZM239.36 280.45L253.12 279.06L254.64 293.02L240.85 294.41ZM253.12 279.06L266.86 277.68L268.42 291.62L254.64 293.02ZM144.10 304.19L157.95 302.79L159.22 316.88L145.33 318.29ZM157.95 302.79L171.78 301.40L173.09 315.47L159.22 316.88ZM171.78 301.40L185.61 300.00L186.96 314.07L173.09 315.47ZM185.61 300.00L199.43 298.60L200.81 312.66L186.96 314.07ZM199.43 298.60L213.25 297.20L214.66 311.26L200.81 312.66ZM227.05 295.81L240.85 294.41L242.34 308.45L228.51 309.85ZM240.85 294.41L254.64 293.02L256.17 307.05L242.34 308.45ZM214.66 311.26L228.51 309.85L229.97 323.98L216.09 325.39ZM228.51 309.85L242.34 308.45L243.84 322.57L229.97 323.98Z" fill="#b5b2c1" stroke="#9f9cab" stroke-width="0.6"/><path d="M168.80 123.81L182.15 122.51L183.44 135.63L170.05 136.94ZM182.15 122.51L195.50 121.21L196.82 134.32L183.44 135.63ZM195.50 121.21L208.84 119.91L210.19 133.01L196.82 134.32ZM208.84 119.91L222.17 118.61L223.56 131.71L210.19 133.01ZM156.65 138.25L170.05 136.94L171.31 150.13L157.88 151.45ZM170.05 136.94L183.44 135.63L184.73 148.82L171.31 150.13ZM183.44 135.63L196.82 134.32L198.15 147.50L184.73 148.82ZM196.82 134.32L210.19 133.01L211.56 146.19L198.15 147.50ZM210.19 133.01L223.56 131.71L224.96 144.87L211.56 146.19ZM223.56 131.71L236.92 130.40L238.35 143.56L224.96 144.87ZM144.44 152.76L157.88 151.45L159.11 164.72L145.64 166.04ZM157.88 151.45L171.31 150.13L172.57 163.39L159.11 164.72ZM171.31 150.13L184.73 148.82L186.03 162.07L172.57 163.39ZM184.73 148.82L198.15 147.50L199.48 160.75L186.03 162.07ZM198.15 147.50L211.56 146.19L212.93 159.43L199.48 160.75ZM211.56 146.19L224.96 144.87L226.36 158.11L212.93 159.43ZM224.96 144.87L238.35 143.56L239.79 156.79L226.36 158.11ZM145.64 166.04L159.11 164.72L160.35 178.06L146.84 179.39ZM159.11 164.72L172.57 163.39L173.85 176.73L160.35 178.06ZM172.57 163.39L186.03 162.07L187.34 175.40L173.85 176.73ZM186.03 162.07L199.48 160.75L200.83 174.07L187.34 175.40ZM199.48 160.75L212.93 159.43L214.31 172.74L200.83 174.07ZM212.93 159.43L226.36 158.11L227.78 171.41L214.31 172.74ZM226.36 158.11L239.79 156.79L241.24 170.09L227.78 171.41ZM133.32 180.72L146.84 179.39L148.05 192.81L134.49 194.15ZM146.84 179.39L160.35 178.06L161.59 191.47L148.05 192.81ZM160.35 178.06L173.85 176.73L175.13 190.13L161.59 191.47ZM173.85 176.73L187.34 175.40L188.66 188.80L175.13 190.13ZM187.34 175.40L200.83 174.07L202.18 187.46L188.66 188.80ZM200.83 174.07L214.31 172.74L215.69 186.12L202.18 187.46ZM214.31 172.74L227.78 171.41L229.20 184.79L215.69 186.12ZM227.78 171.41L241.24 170.09L242.70 183.45L229.20 184.79ZM241.24 170.09L254.70 168.76L256.19 182.12L242.70 183.45ZM134.49 194.15L148.05 192.81L149.26 206.30L135.67 207.65ZM148.05 192.81L161.59 191.47L162.84 204.95L149.26 206.30ZM161.59 191.47L175.13 190.13L176.41 203.61L162.84 204.95ZM175.13 190.13L188.66 188.80L189.98 202.26L176.41 203.61ZM188.66 188.80L202.18 187.46L203.54 200.92L189.98 202.26ZM202.18 187.46L215.69 186.12L217.09 199.58L203.54 200.92ZM215.69 186.12L229.20 184.79L230.63 198.24L217.09 199.58ZM229.20 184.79L242.70 183.45L244.16 196.89L230.63 198.24ZM242.70 183.45L256.19 182.12L257.69 195.55L244.16 196.89ZM122.08 209.00L135.67 207.65L136.86 221.22L123.23 222.57ZM135.67 207.65L149.26 206.30L150.48 219.86L136.86 221.22ZM149.26 206.30L162.84 204.95L164.10 218.51L150.48 219.86ZM162.84 204.95L176.41 203.61L177.71 217.16L164.10 218.51ZM176.41 203.61L189.98 202.26L191.31 215.81L177.71 217.16ZM189.98 202.26L203.54 200.92L204.90 214.45L191.31 215.81ZM203.54 200.92L217.09 199.58L218.49 213.10L204.90 214.45ZM217.09 199.58L230.63 198.24L232.06 211.75L218.49 213.10ZM230.63 198.24L244.16 196.89L245.64 210.40L232.06 211.75ZM244.16 196.89L257.69 195.55L259.20 209.06L245.64 210.40ZM123.23 222.57L136.86 221.22L138.05 234.86L124.38 236.22ZM136.86 221.22L150.48 219.86L151.71 233.50L138.05 234.86ZM150.48 219.86L164.10 218.51L165.36 232.14L151.71 233.50ZM164.10 218.51L177.71 217.16L179.01 230.78L165.36 232.14ZM177.71 217.16L191.31 215.81L192.64 229.42L179.01 230.78ZM191.31 215.81L204.90 214.45L206.27 228.06L192.64 229.42ZM204.90 214.45L218.49 213.10L219.89 226.70L206.27 228.06ZM218.49 213.10L232.06 211.75L233.51 225.35L219.89 226.70ZM232.06 211.75L245.64 210.40L247.12 223.99L233.51 225.35ZM124.38 236.22L138.05 234.86L139.25 248.58L125.54 249.95ZM138.05 234.86L151.71 233.50L152.94 247.21L139.25 248.58ZM151.71 233.50L165.36 232.14L166.63 245.84L152.94 247.21ZM165.36 232.14L179.01 230.78L180.31 244.47L166.63 245.84ZM179.01 230.78L192.64 229.42L193.99 243.11L180.31 244.47ZM192.64 229.42L206.27 228.06L207.65 241.74L193.99 243.11ZM206.27 228.06L219.89 226.70L221.31 240.37L207.65 241.74ZM219.89 226.70L233.51 225.35L234.96 239.01L221.31 240.37ZM233.51 225.35L247.12 223.99L248.60 237.65L234.96 239.01ZM125.54 249.95L139.25 248.58L140.45 262.37L126.71 263.75ZM139.25 248.58L152.94 247.21L154.18 260.99L140.45 262.37ZM152.94 247.21L166.63 245.84L167.91 259.62L154.18 260.99ZM166.63 245.84L180.31 244.47L181.63 258.24L167.91 259.62ZM180.31 244.47L193.99 243.11L195.34 256.87L181.63 258.24ZM193.99 243.11L207.65 241.74L209.04 255.49L195.34 256.87ZM207.65 241.74L221.31 240.37L222.73 254.12L209.04 255.49ZM221.31 240.37L234.96 239.01L236.42 252.75L222.73 254.12ZM234.96 239.01L248.60 237.65L250.10 251.38L236.42 252.75ZM126.71 263.75L140.45 262.37L141.66 276.24L127.88 277.62ZM140.45 262.37L154.18 260.99L155.43 274.85L141.66 276.24ZM154.18 260.99L167.91 259.62L169.19 273.47L155.43 274.85ZM167.91 259.62L181.63 258.24L182.95 272.08L169.19 273.47ZM181.63 258.24L195.34 256.87L196.70 270.70L182.95 272.08ZM195.34 256.87L209.04 255.49L210.43 269.32L196.70 270.70ZM209.04 255.49L222.73 254.12L224.17 267.94L210.43 269.32ZM222.73 254.12L236.42 252.75L237.89 266.56L224.17 267.94ZM236.42 252.75L250.10 251.38L251.60 265.18L237.89 266.56ZM127.88 277.62L141.66 276.24L142.88 290.18L129.06 291.57ZM141.66 276.24L155.43 274.85L156.69 288.79L142.88 290.18ZM155.43 274.85L169.19 273.47L170.49 287.39L156.69 288.79ZM169.19 273.47L182.95 272.08L184.28 286.00L170.49 287.39ZM182.95 272.08L196.70 270.70L198.06 284.61L184.28 286.00ZM196.70 270.70L210.43 269.32L211.84 283.22L198.06 284.61ZM210.43 269.32L224.17 267.94L225.60 281.84L211.84 283.22ZM224.17 267.94L237.89 266.56L239.36 280.45L225.60 281.84ZM237.89 266.56L251.60 265.18L253.12 279.06L239.36 280.45ZM142.88 290.18L156.69 288.79L157.95 302.79L144.10 304.19ZM156.69 288.79L170.49 287.39L171.78 301.40L157.95 302.79ZM170.49 287.39L184.28 286.00L185.61 300.00L171.78 301.40ZM184.28 286.00L198.06 284.61L199.43 298.60L185.61 300.00ZM198.06 284.61L211.84 283.22L213.25 297.20L199.43 298.60ZM211.84 283.22L225.60 281.84L227.05 295.81L213.25 297.20ZM225.60 281.84L239.36 280.45L240.85 294.41L227.05 295.81ZM213.25 297.20L227.05 295.81L228.51 309.85L214.66 311.26Z" fill="#02fca8" stroke="#10d690" stroke-width="0.6"/><path d="M347.4 296.8L405.7 290.9L412.5 350.1L352.6 356.0Z" fill="#707070" fill-opacity="0.22"/><path d="M358.6 309.2L396.6 305.6L401.1 345.0L361.7 348.6Z" fill="#707070" fill-opacity="0.06" stroke="#9c9c9c" stroke-width="1.3"/><path d="M347.4 296.8L358.6 309.2" stroke="#9c9c9c" stroke-width="1.3"/><path d="M405.7 290.9L396.6 305.6" stroke="#9c9c9c" stroke-width="1.3"/><path d="M412.5 350.1L401.1 345.0" stroke="#9c9c9c" stroke-width="1.3"/><path d="M352.6 356.0L361.7 348.6" stroke="#9c9c9c" stroke-width="1.3"/><path d="M347.4 296.8L405.7 290.9L412.5 350.1L352.6 356.0Z" fill="none" stroke="#d0d0d0" stroke-width="2"/><path d="M362.3 348.3L358.8 310.5" stroke="#8cbd1e" stroke-width="2"/><path d="M362.3 348.3L401.1 344.6" stroke="#e03535" stroke-width="2"/><path d="M362.3 348.3L353.5 355.0" stroke="#3a86c2" stroke-width="2"/></svg>
<div style="left:238px;top:464px;width:436px;height:27px;background:#313131;"></div>
<div style="left:241px;top:468px;width:20px;height:19px;background:#1e1e1e;border-radius:3px;"></div>
<svg style="position:absolute;left:241px;top:468px;" width="20" height="19" viewBox="0 0 20 19"><path d="M6 6 H14 L10 13 Z" fill="#e8e8e8"/></svg>
<svg style="position:absolute;left:268px;top:468px;" width="18" height="19" viewBox="0 0 18 19"><path d="M2 5.5 H5.5 L7 3.5 H11 L12.5 5.5 H16 V15 H2 Z" fill="#e0e0e0"/>
<circle cx="9" cy="10" r="3.2" fill="#333"/><circle cx="9" cy="10" r="1.8" fill="#e0e0e0"/></svg>
<div style="left:291px;top:468px;width:173px;height:19px;background:#1e1e1e;border-radius:4px;"></div>
<div class="t" style="left:299px;top:470px;width:80px;height:19px;line-height:19px;color:#b2b2b2;font-size:12px;font-weight:normal;text-align:left;font-family:'Liberation Mono', monospace;">console</div>
<div class="t" style="left:469px;top:467px;width:26px;height:22px;line-height:22px;color:#8ec3ee;font-size:11px;font-weight:normal;text-align:left;font-family:'Liberation Sans', sans-serif;-webkit-text-stroke:0.4px #8ec3ee;">Pers</div>
<div class="t" style="left:500px;top:467px;width:26px;height:22px;line-height:22px;color:#8a8a8a;font-size:11px;font-weight:normal;text-align:left;font-family:'Liberation Sans', sans-serif;-webkit-text-stroke:0.4px #8a8a8a;">Free</div>
<div class="t" style="left:529px;top:467px;width:30px;height:22px;line-height:22px;color:#8a8a8a;font-size:11px;font-weight:normal;text-align:left;font-family:'Liberation Sans', sans-serif;letter-spacing:0.4px;-webkit-text-stroke:0.4px #8a8a8a;">Orth</div>
<div class="t" style="left:564px;top:467px;width:20px;height:22px;line-height:22px;color:#8a8a8a;font-size:11px;font-weight:normal;text-align:left;font-family:'Liberation Sans', sans-serif;-webkit-text-stroke:0.4px #8a8a8a;">Iso</div>
<div class="t" style="left:594px;top:467px;width:10px;height:22px;line-height:22px;color:#e8e8e8;font-size:10.5px;font-weight:normal;text-align:left;font-family:'Liberation Sans', sans-serif;-webkit-text-stroke:0.4px #e8e8e8;">0</div>
<svg style="position:absolute;left:610px;top:468px;" width="64" height="19" viewBox="0 0 64 19">
<g fill="none" stroke="#e6e6e6" stroke-width="1.6">
<path d="M3.6 10.8 A5.4 5.4 0 1 0 9.8 4.2"/>
<path d="M3.5 4 L8 8.5"/>
<path d="M24.6 14.9 V8.9 H30.6 V4.1 H35.7 V14.9 Z M30.6 8.9 V14.9 M30.6 8.9 H35.7" stroke-linejoin="round" stroke-width="1.5"/>
</g>
<path d="M9.2 9.6 L4.8 9.2 L8.8 5.2 Z" fill="#e6e6e6"/>
<path d="M52 3 L58.2 6.2 V12.2 L52 15 L45.7 12.2 V6.2 Z" fill="#f7c153"/>
<path d="M45.7 6.2 L52 9.2 L58.2 6.2 M52 9.2 V15" fill="none" stroke="#5a4a2a" stroke-width="0.9"/>
</svg>
<div style="left:675px;top:59px;width:99px;height:432px;background:#3d3d3d;border-radius:3px 3px 0 0;"></div>
<div class="t" style="left:675px;top:63px;width:99px;height:16px;line-height:16px;color:#8a8a8a;font-size:12px;font-weight:normal;text-align:center;font-family:'Liberation Sans', sans-serif;">Edit</div>
<div style="left:683px;top:85px;width:84px;height:23px;background:transparent;border:1px solid #5c5c5c;border-radius:6px;box-sizing:border-box;"></div>
<div class="t" style="left:689px;top:85px;width:20px;height:23px;line-height:23px;color:#8ec3ee;font-size:12px;font-weight:normal;text-align:left;font-family:'Liberation Sans', sans-serif;-webkit-text-stroke:0.4px #8ec3ee;">All</div>
<svg style="position:absolute;left:716px;top:87px;" width="50" height="20" viewBox="0 0 50 20"><g fill="none" stroke="#c4c4c4" stroke-width="1.5">
<path d="M4.5 5.5 L13.4 13.6 M13.4 5.5 L4.5 13.6"/></g>
<path d="M2.8 3.8 H7.3 L2.8 8.3 Z M15.1 3.8 H10.6 L15.1 8.3 Z M2.8 15.3 H7.3 L2.8 10.8 Z M15.1 15.3 H10.6 L15.1 10.8 Z" fill="#c4c4c4"/>
<path d="M33.5 8.8 L40.6 14.6" stroke="#c4c4c4" stroke-width="2.7" stroke-linecap="round"/>
<circle cx="32.6" cy="7.8" r="3.3" fill="#c4c4c4"/>
<path d="M32.5 6.9 L34.2 3.4 L37 5.8 L33.4 7.8 Z" fill="#3d3d3d"/>
</svg>
<div class="t" style="left:675px;top:118px;width:99px;height:18px;line-height:18px;color:#d8d8d8;font-size:11px;font-weight:normal;text-align:center;font-family:'Liberation Sans', sans-serif;-webkit-text-stroke:0.4px #d8d8d8;">Tool</div>
<div style="left:685px;top:138px;width:80px;height:71px;background:#484848;border-radius:3px;"></div>
<div style="left:685px;top:138px;width:39px;height:22px;background:#8a8a8a;"></div>
<div class="t" style="left:685px;top:138px;width:39px;height:22px;line-height:22px;color:#2e2e2e;font-size:10px;font-weight:normal;text-align:center;font-family:'Liberation Sans', sans-serif;-webkit-text-stroke:0.4px #2e2e2e;">Full</div>
<div style="left:725px;top:138px;width:40px;height:22px;background:#8a8a8a;"></div>
<div class="t" style="left:725px;top:138px;width:40px;height:22px;line-height:22px;color:#2e2e2e;font-size:10px;font-weight:normal;text-align:center;font-family:'Liberation Sans', sans-serif;-webkit-text-stroke:0.4px #2e2e2e;">Fill</div>
<div style="left:685px;top:161px;width:39px;height:23px;background:#8a8a8a;"></div>
<div class="t" style="left:685px;top:161px;width:39px;height:23px;line-height:23px;color:#2e2e2e;font-size:10px;font-weight:normal;text-align:center;font-family:'Liberation Sans', sans-serif;-webkit-text-stroke:0.4px #2e2e2e;">Del</div>
<div style="left:725px;top:161px;width:40px;height:23px;background:#8a8a8a;"></div>
<div class="t" style="left:725px;top:161px;width:40px;height:23px;line-height:23px;color:#2e2e2e;font-size:10px;font-weight:normal;text-align:center;font-family:'Liberation Sans', sans-serif;-webkit-text-stroke:0.4px #2e2e2e;">2X</div>
<div style="left:685px;top:185px;width:39px;height:24px;background:#8a8a8a;"></div>
<div class="t" style="left:685px;top:185px;width:39px;height:24px;line-height:24px;color:#2e2e2e;font-size:10px;font-weight:normal;text-align:center;font-family:'Liberation Sans', sans-serif;-webkit-text-stroke:0.4px #2e2e2e;">Fit</div>
<div style="left:725px;top:185px;width:40px;height:24px;background:#8a8a8a;"></div>
<div class="t" style="left:725px;top:185px;width:40px;height:24px;line-height:24px;color:#2e2e2e;font-size:10px;font-weight:normal;text-align:center;font-family:'Liberation Sans', sans-serif;-webkit-text-stroke:0.4px #2e2e2e;">Inv</div>
<div class="t" style="left:675px;top:210px;width:99px;height:18px;line-height:18px;color:#e0e0e0;font-size:11px;font-weight:normal;text-align:center;font-family:'Liberation Sans', sans-serif;-webkit-text-stroke:0.4px #e0e0e0;">Select</div>
<div style="left:683px;top:234px;width:84px;height:2px;background:#333333;"></div>
<div class="t" style="left:675px;top:242px;width:99px;height:18px;line-height:18px;color:#d8d8d8;font-size:11px;font-weight:normal;text-align:center;font-family:'Liberation Sans', sans-serif;-webkit-text-stroke:0.4px #d8d8d8;">Rot</div>
<div class="t" style="left:675px;top:265px;width:99px;height:18px;line-height:18px;color:#d8d8d8;font-size:11px;font-weight:normal;text-align:center;font-family:'Liberation Sans', sans-serif;-webkit-text-stroke:0.4px #d8d8d8;">Flip</div>
<div class="t" style="left:675px;top:287px;width:99px;height:18px;line-height:18px;color:#d8d8d8;font-size:11px;font-weight:normal;text-align:center;font-family:'Liberation Sans', sans-serif;-webkit-text-stroke:0.4px #d8d8d8;">Loop</div>
<div class="t" style="left:675px;top:309.6px;width:99px;height:18px;line-height:18px;color:#d8d8d8;font-size:11px;font-weight:normal;text-align:center;font-family:'Liberation Sans', sans-serif;-webkit-text-stroke:0.4px #d8d8d8;">Scale</div>
<div class="t" style="left:675px;top:332px;width:99px;height:18px;line-height:18px;color:#d8d8d8;font-size:11px;font-weight:normal;text-align:center;font-family:'Liberation Sans', sans-serif;-webkit-text-stroke:0.4px #d8d8d8;">Repeat</div>
<div style="left:683px;top:356px;width:84px;height:2px;background:#333333;"></div>
<div class="t" style="left:675px;top:363.6px;width:99px;height:18px;line-height:18px;color:#d8d8d8;font-size:11px;font-weight:normal;text-align:center;font-family:'Liberation Sans', sans-serif;letter-spacing:0.7px;-webkit-text-stroke:0.4px #d8d8d8;">Mirror</div>
<div class="t" style="left:675px;top:386.5px;width:99px;height:18px;line-height:18px;color:#d8d8d8;font-size:11px;font-weight:normal;text-align:center;font-family:'Liberation Sans', sans-serif;-webkit-text-stroke:0.4px #d8d8d8;">Diagonal</div>
<div class="t" style="left:675px;top:409px;width:99px;height:18px;line-height:18px;color:#d8d8d8;font-size:11px;font-weight:normal;text-align:center;font-family:'Liberation Sans', sans-serif;-webkit-text-stroke:0.4px #d8d8d8;">Misc</div>
<div class="t" style="left:675px;top:431px;width:99px;height:18px;line-height:18px;color:#d8d8d8;font-size:11px;font-weight:normal;text-align:center;font-family:'Liberation Sans', sans-serif;-webkit-text-stroke:0.4px #d8d8d8;">Shape</div>
<div style="left:774px;top:59px;width:5px;height:432px;background:#3d3d3d;"></div>
<div style="left:774px;top:60px;width:5px;height:51px;background:#333333;border-radius:2px;"></div>
<div style="left:774px;top:115px;width:5px;height:215px;background:#383838;border-radius:2px;"></div>
<div style="left:779px;top:59px;width:126px;height:432px;background:#3d3d3d;border-radius:3px 3px 0 0;"></div>
<div class="t" style="left:779px;top:63px;width:126px;height:16px;line-height:16px;color:#8a8a8a;font-size:12px;font-weight:normal;text-align:center;font-family:'Liberation Sans', sans-serif;">Project</div>
<div style="left:787px;top:85px;width:110px;height:23px;background:transparent;border:1px solid #5c5c5c;border-radius:6px;box-sizing:border-box;"></div>
<svg style="position:absolute;left:795px;top:87px;" width="95" height="20" viewBox="0 0 95 20">
<path d="M5.6 4.6 H9.6 L11 6 H16.7 V14.2 H5.6 Z M5.6 6.8 H16.7" fill="none" stroke="#8ec3ee" stroke-width="1.5" stroke-linejoin="round"/>
<path d="M46.2 10 L53.6 4.4" stroke="#a0a0a0" stroke-width="3" stroke-linecap="round"/>
<circle cx="42.9" cy="13.2" r="2.3" fill="#a0a0a0"/><path d="M43.5 12.5 L46.5 10" stroke="#a0a0a0" stroke-width="1.8"/>
<g fill="#b0b0b0"><path d="M77.4 3.9 L78.8 5.3 L77.4 6.7 L76 5.3 Z M77.4 8 L78.8 9.4 L77.4 10.8 L76 9.4 Z M77.4 12.3 L78.8 13.7 L77.4 15.1 L76 13.7 Z"/>
<rect x="80.3" y="4.5" width="9.8" height="1.6"/><rect x="80.3" y="8.6" width="9.8" height="1.6"/><rect x="80.3" y="12.9" width="9.8" height="1.6" fill="#999"/></g>
</svg>
<div style="left:785px;top:115px;width:115px;height:376px;background:#2a2a2a;border-radius:3px;"></div>
<div style="left:894px;top:317px;width:6px;height:166px;background:#555555;border-radius:3px;"></div>
<div style="left:840px;top:484px;width:54px;height:6px;background:#555555;border-radius:3px;"></div>
<div style="left:905px;top:59px;width:6px;height:432px;background:#292929;"></div>
</body></html>
